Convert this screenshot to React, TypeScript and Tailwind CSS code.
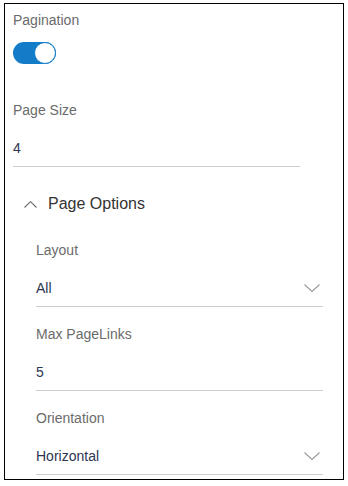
const FONT = { fontFamily: '"Liberation Sans", Arial, sans-serif' };

function ChevronDown() {
  return (
    <svg width="16" height="9" viewBox="0 0 16 9" className="shrink-0">
      <path d="M0.5 0.5 L8 7.5 L15.5 0.5" fill="none" stroke="#9a9a9a" strokeWidth="1.1" />
    </svg>
  );
}

function ChevronUp() {
  return (
    <svg width="13" height="7" viewBox="0 0 13 7" className="shrink-0">
      <path d="M0.5 6.5 L6.5 0.7 L12.5 6.5" fill="none" stroke="#6a6a6a" strokeWidth="1.1" />
    </svg>
  );
}

function Field({
  label,
  value,
  select,
  className = "",
}: {
  label: string;
  value: string;
  select?: boolean;
  className?: string;
}) {
  return (
    <div className={`w-[287px] ${className}`}>
      <p className="text-[14px] leading-[18px] text-[#6b6b6b]">{label}</p>
      <div className="mt-[11px] h-[37px] flex items-center justify-between border-b border-[#cfcfcf] pr-[3px]">
        <span className="text-[14px] leading-[18px] text-[#2e3553]">{value}</span>
        {select && <ChevronDown />}
      </div>
    </div>
  );
}

export default function App() {
  return (
    <div className="pt-[3px] pl-[4px] bg-white" style={FONT}>
      <div className="w-[340px] h-[477px] border border-black bg-white pl-[8px] pt-[7px]">
        <p className="text-[14px] leading-[18px] text-[#6b6b6b]">Pagination</p>

        {/* Toggle */}
        <div className="mt-[13px] w-[43px] h-[22px] rounded-full bg-[#127cc9] relative">
          <div className="absolute right-0 top-0 w-[22px] h-[22px] rounded-full bg-white border-[1.5px] border-[#127cc9]" />
        </div>

        <Field label="Page Size" value="4" className="mt-[37px]" />

        {/* Page Options */}
        <div className="mt-[27px] pl-[11px] flex items-center gap-[11px] h-[20px]">
          <ChevronUp />
          <span className="text-[16px] leading-[20px] text-[#333333]">Page Options</span>
        </div>

        <div className="pl-[23px]">
          <Field label="Layout" value="All" select className="mt-[27px]" />
          <Field label="Max PageLinks" value="5" className="mt-[18px]" />
          <Field label="Orientation" value="Horizontal" select className="mt-[18px]" />
        </div>
      </div>
    </div>
  );
}
